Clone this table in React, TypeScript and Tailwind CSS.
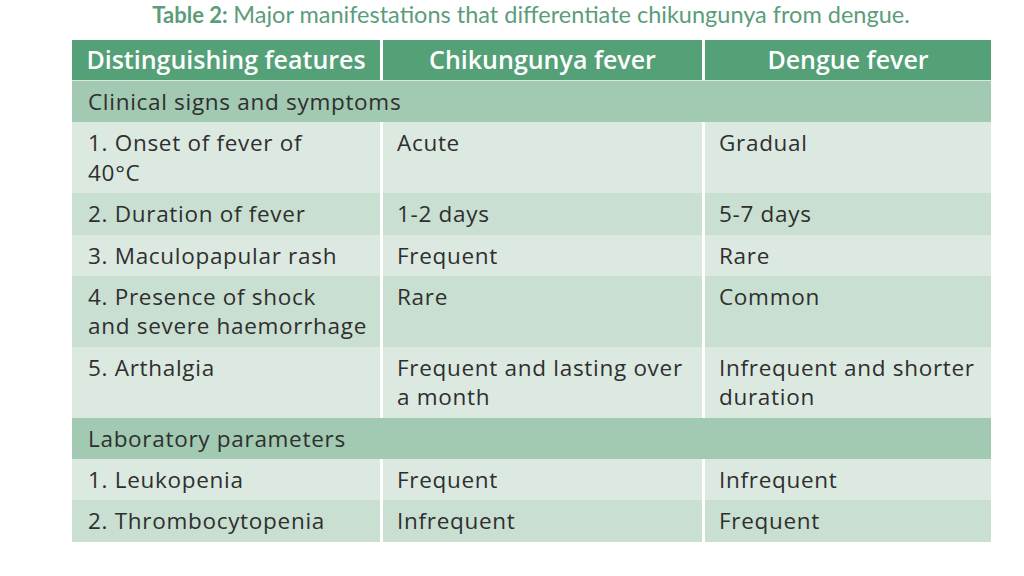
import clsx from "clsx";

type Row = {
  feature: React.ReactNode;
  chik: React.ReactNode;
  dengue: React.ReactNode;
};

const clinicalRows: Row[] = [
  {
    feature: (
      <>
        1. Onset of fever of
        <br />
        40°C
      </>
    ),
    chik: "Acute",
    dengue: "Gradual",
  },
  { feature: "2. Duration of fever", chik: "1-2 days", dengue: "5-7 days" },
  { feature: "3. Maculopapular rash", chik: "Frequent", dengue: "Rare" },
  {
    feature: (
      <>
        4. Presence of shock
        <br />
        and severe haemorrhage
      </>
    ),
    chik: "Rare",
    dengue: "Common",
  },
  {
    feature: "5. Arthalgia",
    chik: (
      <>
        Frequent and lasting over
        <br />a month
      </>
    ),
    dengue: (
      <>
        Infrequent and shorter
        <br />
        duration
      </>
    ),
  },
];

const labRows: Row[] = [
  { feature: "1. Leukopenia", chik: "Frequent", dengue: "Infrequent" },
  { feature: "2. Thrombocytopenia", chik: "Infrequent", dengue: "Frequent" },
];

const gridCols = "grid grid-cols-[308px_319px_1fr] gap-x-[3px]";
const cell = "py-[6px] leading-[29.4px] whitespace-nowrap";

const SectionRow = ({ label }: { label: string }) => (
  <div className={clsx("bg-[#a2c9b1] pl-[16px]", cell)}>{label}</div>
);

const BodyRow = ({ row, index }: { row: Row; index: number }) => {
  const bg = index % 2 === 0 ? "bg-[#dce9e1]" : "bg-[#c9dfd1]";
  return (
    <div className={gridCols}>
      <div className={clsx(bg, cell, "pl-[16px]")}>{row.feature}</div>
      <div className={clsx(bg, cell, "pl-[14px]")}>{row.chik}</div>
      <div className={clsx(bg, cell, "pl-[14px]")}>{row.dengue}</div>
    </div>
  );
};

export default function App() {
  return (
    <div
      className="w-[1024px] h-[576px] bg-white overflow-hidden"
      style={{ fontFamily: "'Open Sans', Lato, sans-serif" }}
    >
      <div className="h-[40px] overflow-hidden flex justify-center">
        <p
          className="text-[22px] leading-[24px] mt-[2px] text-[#5b9c7a] pl-[38px]"
          style={{ fontFamily: "Lato, sans-serif" }}
        >
          <span className="font-bold">Table 2:</span>{" "}
          <span className="text-[23.5px]">
            Major manifestations that differentiate chikungunya from dengue.
          </span>
        </p>
      </div>
      <div className="ml-[72px] w-[919px] text-[22.5px] tracking-[0.7px] text-[#2f2f2f]">
        <div
          className={clsx(
            gridCols,
            "bg-[#54a077] text-white font-semibold text-[25px] tracking-[0px] h-[41px] border-b border-[#d6e8dc]"
          )}
        >
          <div className="flex items-center justify-center border-r-[3px] border-white -mr-[3px]">
            Distinguishing features
          </div>
          <div className="flex items-center justify-center border-r-[3px] border-white -mr-[3px]">
            Chikungunya fever
          </div>
          <div className="flex items-center justify-center">Dengue fever</div>
        </div>
        <SectionRow label="Clinical signs and symptoms" />
        {clinicalRows.map((row, i) => (
          <BodyRow key={i} row={row} index={i} />
        ))}
        <SectionRow label="Laboratory parameters" />
        {labRows.map((row, i) => (
          <BodyRow key={i} row={row} index={i} />
        ))}
      </div>
    </div>
  );
}
